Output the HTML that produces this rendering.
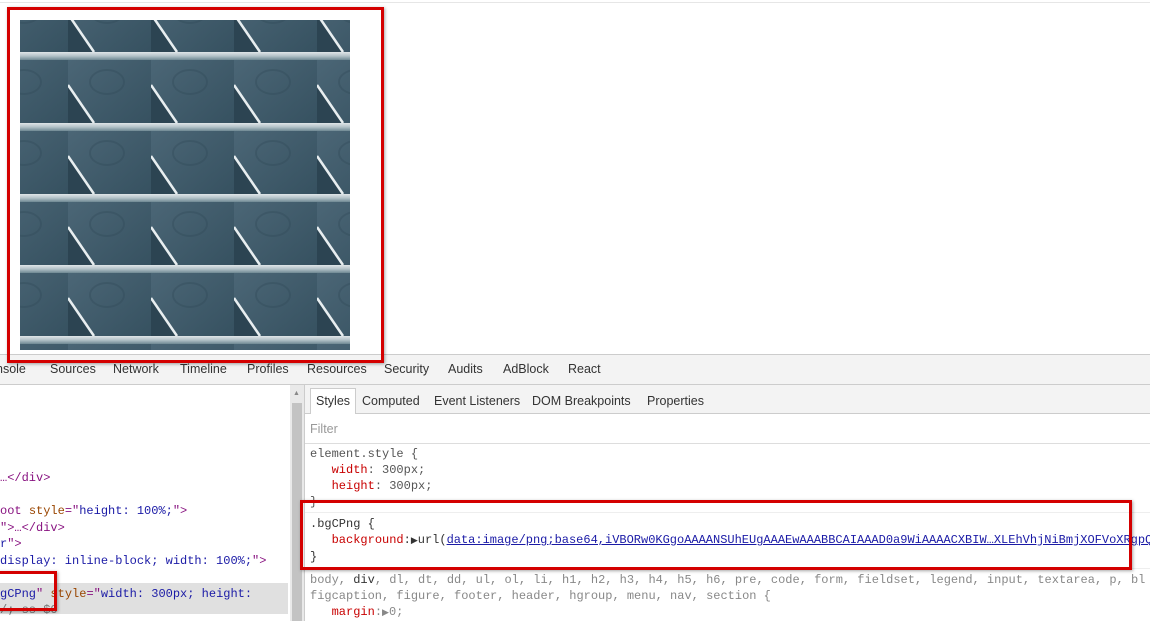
<!DOCTYPE html>
<html><head><meta charset="utf-8"><style>
*{margin:0;padding:0;box-sizing:border-box}
body{width:1150px;height:621px;overflow:hidden;background:#fff;position:relative;font-family:"Liberation Sans",sans-serif}
.abs{position:absolute}
.mono{font-family:"Liberation Mono",monospace;font-size:12px;white-space:pre;line-height:16px}
.tab{position:absolute;top:362px;font-size:12.5px;color:#333}
.red{color:#c80000}.tag{color:#881280}.attr{color:#994500}.val{color:#1a1aa6}
.box{position:absolute;border:3px solid #d40000;box-shadow:1px 1px 3px rgba(0,0,0,.35);z-index:5}
</style></head><body>
<div class="abs" style="left:0;top:2px;width:1150px;height:1px;background:#e6e6e6"></div>
<svg class="abs" style="left:20px;top:20px" width="330" height="330">
<defs>
<linearGradient id="bg" x1="0" y1="0" x2="1" y2="1"><stop offset="0" stop-color="#4b6676"/><stop offset="1" stop-color="#35505f"/></linearGradient>
<linearGradient id="bar" x1="0" y1="0" x2="0" y2="1"><stop offset="0" stop-color="#dfe6e8"/><stop offset=".5" stop-color="#b3c2c8"/><stop offset="1" stop-color="#6f8893"/></linearGradient>
<pattern id="p" width="83" height="71" patternUnits="userSpaceOnUse" x="48" y="40">
<rect width="83" height="71" fill="url(#bg)"/>
<polygon points="0,25 26,63 0,63" fill="#2c4452"/>
<ellipse cx="39" cy="22" rx="17" ry="12" fill="none" stroke="#2d4756" stroke-width="2" opacity=".35"/>
<line x1="0" y1="25" x2="26" y2="63" stroke="#e8eef0" stroke-width="2.5"/>
<rect y="63" width="83" height="8" fill="url(#bar)"/>
</pattern></defs>
<rect width="330" height="330" fill="url(#p)"/>
</svg>

<div class="abs" style="left:0;top:354px;width:1150px;height:31px;background:#f3f3f3;border-top:1px solid #ccc;border-bottom:1px solid #ccc"></div>
<div class="tab" style="left:-4px">nsole</div>
<div class="tab" style="left:50px">Sources</div>
<div class="tab" style="left:113px">Network</div>
<div class="tab" style="left:180px">Timeline</div>
<div class="tab" style="left:247px">Profiles</div>
<div class="tab" style="left:307px">Resources</div>
<div class="tab" style="left:384px">Security</div>
<div class="tab" style="left:448px">Audits</div>
<div class="tab" style="left:503px">AdBlock</div>
<div class="tab" style="left:568px">React</div>
<div class="box" style="left:7px;top:7px;width:377px;height:356px"></div>

<div class="abs" style="left:290px;top:385px;width:14px;height:236px;background:#e9e9e9"></div>
<div class="abs" style="left:292px;top:403px;width:10px;height:218px;background:#c3c3c3"></div>
<div class="abs" style="left:293px;top:390px;font-size:7px;color:#888">▲</div>
<div class="abs" style="left:304px;top:385px;width:1px;height:236px;background:#ccc"></div>

<div class="abs" style="left:305px;top:385px;width:845px;height:29px;background:#f3f3f3;border-bottom:1px solid #ccc"></div>
<div class="abs" style="left:310px;top:388px;width:46px;height:26px;background:#fff;border:1px solid #ccc;border-bottom:none"></div>
<div class="abs" style="left:316px;top:394px;font-size:12.5px;color:#333">Styles</div>
<div class="abs" style="left:362px;top:394px;font-size:12.5px;color:#333">Computed</div>
<div class="abs" style="left:434px;top:394px;font-size:12.5px;color:#333">Event Listeners</div>
<div class="abs" style="left:532px;top:394px;font-size:12.5px;color:#333">DOM Breakpoints</div>
<div class="abs" style="left:647px;top:394px;font-size:12.5px;color:#333">Properties</div>
<div class="abs" style="left:310px;top:422px;font-size:12.5px;color:#999">Filter</div>
<div class="abs" style="left:305px;top:443px;width:845px;height:1px;background:#ddd"></div>
<div class="abs" style="left:305px;top:512px;width:845px;height:1px;background:#eee"></div>
<div class="abs" style="left:305px;top:568px;width:845px;height:1px;background:#eee"></div>

<div class="abs mono" style="left:310px;top:446px;color:#555">element.style {
   <span class="red">width</span>: 300px;
   <span class="red">height</span>: 300px;
}</div>
<div class="abs mono" style="left:310px;top:516px;color:#333">.bgCPng {
   <span class="red">background</span>:<span style="font-size:9px">▶</span>url(<span style="color:#1a1aa6;text-decoration:underline">data:image/png;base64,iVBORw0KGgoAAAANSUhEUgAAAEwAAABBCAIAAAD0a9WiAAAACXBIW…XLEhVhjNiBmjXOFVoXRgpQ</span>
}</div>
<div class="abs mono" style="left:310px;top:572px;color:#888;line-height:16px">body, <span style="color:#333">div</span>, dl, dt, dd, ul, ol, li, h1, h2, h3, h4, h5, h6, pre, code, form, fieldset, legend, input, textarea, p, bl
figcaption, figure, footer, header, hgroup, menu, nav, section {
   <span class="red">margin</span>:<span style="font-size:9px">▶</span>0;</div>
<div class="box" style="left:300px;top:500px;width:832px;height:70px"></div>

<div class="abs" style="left:0;top:583px;width:288px;height:31px;background:#e0e0e0"></div>
<div class="abs mono" style="left:0;top:470px;line-height:16.5px"><span class="tag">…&lt;/div&gt;</span>

<span class="tag">oot</span> <span class="attr">style</span><span class="tag">="</span><span class="val">height: 100%;</span><span class="tag">"&gt;</span>
<span class="tag">"&gt;…&lt;/div&gt;</span>
<span class="val">r</span><span class="tag">"&gt;</span>
<span class="val">display: inline-block; width: 100%;</span><span class="tag">"&gt;</span>

<span class="val">gCPng</span><span class="tag">"</span> <span class="attr">style</span><span class="tag">="</span><span class="val">width: 300px; height:</span>
<span style="color:#777">/; ss $0</span></div>
<div class="box" style="left:-3px;top:571px;width:60px;height:40px"></div>
</body></html>
